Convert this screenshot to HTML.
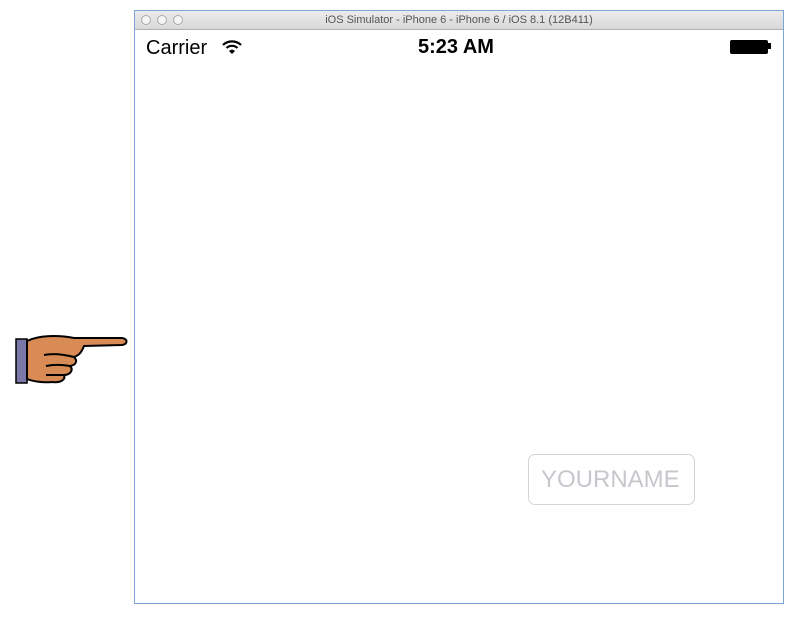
<!DOCTYPE html>
<html><head><style>
body{margin:0;width:801px;height:625px;background:#fff;position:relative;overflow:hidden;font-family:"Liberation Sans",sans-serif}
.win{position:absolute;left:134px;top:10px;width:648px;height:592px;border:1px solid #7da6d8;background:#fff}
.tb{position:absolute;left:0;top:0;right:0;height:18px;background:linear-gradient(#ececec,#d8d8d8);border-bottom:1px solid #b0b0b0;font-size:11px;color:#555;text-align:center;line-height:18px}
.dot{position:absolute;top:4px;width:8px;height:8px;border:1px solid #aaa;border-radius:50%;background:#f4f4f4}
</style></head><body>
<div class="win">
<div class="tb">iOS Simulator - iPhone 6 - iPhone 6 / iOS 8.1 (12B411)
<div class="dot" style="left:6px"></div><div class="dot" style="left:22px"></div><div class="dot" style="left:38px"></div></div>
<div style="position:absolute;left:11px;top:26px;font-size:20px;color:#000">Carrier</div>
<svg style="position:absolute;left:87px;top:28px" width="20" height="16" viewBox="0 0 20 16"><path d="M1 6a13 13 0 0 1 18 0" stroke="#000" stroke-width="2.2" fill="none"/><path d="M4.5 9a8 8 0 0 1 11 0" stroke="#000" stroke-width="2.2" fill="none"/><path d="M7 12l3 3 3-3a4 4 0 0 0-6 0z" fill="#000"/></svg>
<div style="position:absolute;left:283px;top:25px;font-size:20px;font-weight:bold;color:#000">5:23 AM</div>
<div style="position:absolute;left:595px;top:29px;width:36px;height:12px;background:#000;border:1px solid #000;border-radius:2px"></div>
<div style="position:absolute;left:633px;top:32px;width:3px;height:6px;background:#000"></div>
<div style="position:absolute;left:393px;top:443px;width:165px;height:49px;border:1px solid #d4d4d4;border-radius:7px;font-size:24px;color:#c7c7cd;line-height:49px;text-indent:12px">YOURNAME</div>
</div>
<svg style="position:absolute;left:14px;top:333px" width="115" height="54" viewBox="0 0 115 54">
<rect x="2" y="6" width="11" height="44" fill="#7a78a8" stroke="#000" stroke-width="1.5"/>
<path d="M13 8 C25 2 45 2 60 5 L108 5 C114 6 114 11 108 12 L70 13 C68 18 66 22 60 24 C64 28 62 32 56 33 C60 37 56 42 50 42 C52 47 46 50 38 49 C28 50 18 48 13 46 Z" fill="#d98b55" stroke="#000" stroke-width="2"/>
<path d="M30 22 C40 20 52 22 60 24 M32 33 C42 31 50 32 56 33 M32 42 L50 42" stroke="#000" stroke-width="2" fill="none"/>
</svg>
</body></html>
